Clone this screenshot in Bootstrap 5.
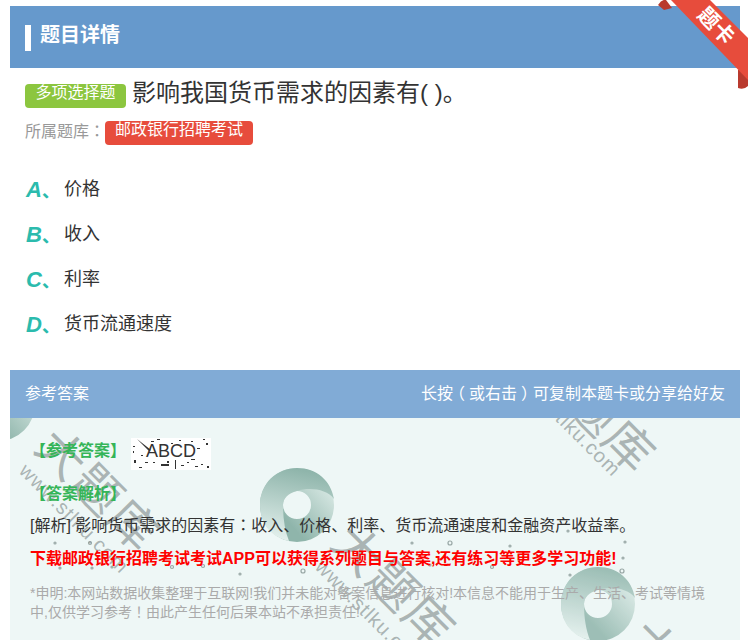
<!DOCTYPE html>
<html lang="zh-CN">
<head>
<meta charset="utf-8">
<link rel="stylesheet" href="https://cdn.jsdelivr.net/npm/bootstrap@5.3.0/dist/css/bootstrap.min.css">
<style>
html,body{height:640px;overflow:hidden;background:#fff}
body{font-family:"Liberation Sans","Noto Sans CJK SC",sans-serif;color:#333;position:relative}
.sheet{margin:6px 10px 0;width:730px}
.head-bar{height:62px;background:#6699cc;padding:0 15px;color:#fff;font-size:20px;font-weight:700}
.head-tick{width:6px;height:26px;background:#fff;margin-right:9px;margin-top:2px}
.head-title{margin-top:-5px}
.q-area{padding:14px 15px 0}
.kind-tag{width:101px;height:24px;background:#8cc63f;color:#fff;border-radius:4px;font-size:16px;line-height:18px;text-align:center;margin-right:6px;margin-top:2px}
.q-text{font-size:24px;line-height:22px;color:#333}
.bank-row{margin-top:13px;height:28px;color:#999;font-size:16px}
.bank-lbl{line-height:18px}
.bank-tag{background:#e74c3c;color:#fff;border-radius:4px;height:24px;width:148px;font-size:16px;line-height:18px;text-align:center}
.opts{margin-top:18px;padding-left:1px}
.opt{height:45px;font-size:18px;color:#333}
.opt-l{width:38px;color:#2bbbad;font-weight:700;font-style:italic;font-size:22px}
.opt-l span{font-style:normal;font-size:18px}
.ans-head{margin-top:23px;height:48px;background:#81abd6;color:#fff;font-size:16px;padding:0 15px}
.par-l,.par-r{display:inline-block}
.par-l{transform:translateX(-4px)}
.par-r{transform:translateX(4px)}
.ans-body{height:222px;background:#eef7f6;padding:20px 20px 0;overflow:hidden;position:relative}
.ans-flow{position:relative;z-index:1}
.back-rings{position:absolute;left:0;top:0}
.ans-label{color:#35b558;font-size:16px;font-weight:700;line-height:24px}
.lab1{margin-top:-6px}
.abcd{width:80px;height:32px;background:#fff;color:#333;font-size:18px;line-height:27px;text-align:center;margin-left:5px;position:relative;overflow:hidden}
.abcd svg{position:absolute;left:0;top:0}
.abcd b{font-weight:400;position:relative}
.lab2{margin-top:12px}
.expl{font-size:16px;color:#333;line-height:24px;margin-top:6px}
.promo{font-size:16px;font-weight:700;color:#f00;line-height:24px;margin-top:9px}
.note{font-size:14px;color:#aaa;line-height:18px;margin-top:13px}
.pc{font-family:"Noto Sans CJK TC",sans-serif}
.overlay{position:absolute;left:10px;top:418px;width:730px;height:222px;overflow:hidden;pointer-events:none}
.ring{position:absolute;left:0;top:0;opacity:.85}
.wm{position:absolute;color:rgba(125,135,135,.6);white-space:nowrap;transform:rotate(45deg);transform-origin:0 0;line-height:1}
.wm-big{font-size:48px;letter-spacing:2px}
.wm-url{font-size:20px;letter-spacing:1px;font-family:"Liberation Sans",sans-serif}
.ribbon{position:absolute;right:2px;top:0;width:90px;height:90px}
.rib-text{position:absolute;left:681px;top:12px;width:70px;text-align:center;color:#fff;font-size:21px;font-weight:700;line-height:28px;transform:rotate(45deg)}
</style>
</head>
<body>
<div class="sheet">
  <div class="head-bar d-flex align-items-center"><span class="head-tick"></span><span class="head-title">题目详情</span></div>
  <div class="q-area">
    <div class="d-flex align-items-start"><span class="kind-tag">多项选择题</span><span class="q-text">影响我国货币需求的因素有( )。</span></div>
    <div class="bank-row d-flex align-items-start"><span class="bank-lbl">所属题库<span class="pc" lang="zh-TW">：</span></span><span class="bank-tag">邮政银行招聘考试</span></div>
    <div class="opts">
      <div class="opt d-flex align-items-center"><span class="opt-l">A<span>、</span></span><span>价格</span></div>
      <div class="opt d-flex align-items-center"><span class="opt-l">B<span>、</span></span><span>收入</span></div>
      <div class="opt d-flex align-items-center"><span class="opt-l">C<span>、</span></span><span>利率</span></div>
      <div class="opt d-flex align-items-center"><span class="opt-l">D<span>、</span></span><span>货币流通速度</span></div>
    </div>
  </div>
  <div class="ans-head d-flex align-items-center justify-content-between"><span>参考答案</span><span>长按<span class="par-l">（</span>或右击<span class="par-r">）</span>可复制本题卡或分享给好友</span></div>
  <div class="ans-body">
    <svg class="back-rings" width="730" height="222">
      <defs>
        <linearGradient id="ga" x1="0.4" y1="0" x2="0.2" y2="1"><stop offset="0" stop-color="#8fb5ab"/><stop offset="1" stop-color="#e6f2ef"/></linearGradient>
        <linearGradient id="gb" x1="0.35" y1="0.7" x2="0.95" y2="0.15"><stop offset="0" stop-color="#8fb5ab"/><stop offset="1" stop-color="#e0eeea"/></linearGradient>
        <g id="swirl">
          <path fill-rule="evenodd" d="M-37 0A37 37 0 1 1 37 0 37 37 0 1 1-37 0ZM-14 0A14 14 0 1 0 14 0 14 14 0 1 0-14 0Z" fill="url(#gb)"/>
          <path d="M-8 36C-28 32-37 16-37 0-37-22-20-37 0-37 20-37 34-24 37-6 30-16 12-18 0-14-9-12-14-6-14 0-14 14-12 26-8 36Z" fill="url(#ga)"/>
        </g>
      </defs>
      <use href="#swirl" x="287" y="87"/>
      <use href="#swirl" x="-12" y="-14"/>
    </svg>
    <div class="ans-flow">
    <div class="d-flex align-items-center">
      <span class="ans-label lab1">【参考答案】</span>
      <span class="abcd"><svg width="80" height="32" fill="#333"><path d="M6 1l14 11-2 1zM2 8h2v1H2zM20 3h3v1h-3zM40 5h2v1h-2zM60 3h2v1h-2zM75 5h2v2h-2zM3 22h2v3H3zM14 24h3v1h-3zM30 26h8v2h-8zM44 22h1v9h-1zM50 27h3v1h-3zM70 26h2v1h-2zM76 28h2v2h-2zM2 13h1v2H2zM66 10h3v1h-3zM8 29h3v1H8zM26 1h3v1h-3zM48 2h2v1h-2zM72 1h2v1h-2zM10 17h2v1h-2zM60 21h4v1h-4zM22 24h2v1h-2zM36 23h2v2h-2zM56 24h2v1h-2zM64 28h3v1h-3z"/></svg><b>ABCD</b></span>
    </div>
    <div class="ans-label lab2">【答案解析】</div>
    <div class="expl">[解析] 影响货币需求的因素有<span class="pc" lang="zh-TW">：</span>收入、价格、利率、货币流通速度和金融资产收益率。</div>
    <div class="promo">下载邮政银行招聘考试考试APP可以获得系列题目与答案,还有练习等更多学习功能!</div>
    <div class="note">*申明:本网站数据收集整理于互联网!我们并未能对答案信息进行核对!本信息不能用于生产、生活、考试等情境中,仅供学习参考<span class="pc" lang="zh-TW">！</span>由此产生任何后果本站不承担责任!</div>
    </div>
  </div>
</div>
<div class="overlay">
  <svg width="730" height="222" class="ring">
    <use href="#swirl" x="588" y="186"/>
    <g fill="none" stroke="#8a9a98" stroke-width="1.2">
      <circle cx="45" cy="125" r="1"/><circle cx="80" cy="125" r="1.5"/><circle cx="50" cy="150" r="1"/><circle cx="82" cy="150" r="1"/><circle cx="102" cy="149" r="1"/><circle cx="162" cy="149" r="1.5"/><circle cx="193" cy="148" r="1.5"/><circle cx="230" cy="156" r="1"/><circle cx="293" cy="153" r="2"/><circle cx="340" cy="140" r="1"/><circle cx="402" cy="125" r="1"/><circle cx="440" cy="125" r="2"/><circle cx="615" cy="124" r="1"/><circle cx="613" cy="140" r="1"/><circle cx="612" cy="153" r="2"/><circle cx="560" cy="157" r="1"/><circle cx="420" cy="147" r="1"/><circle cx="482" cy="149" r="1.5"/><circle cx="558" cy="113" r="1"/><circle cx="500" cy="128" r="1"/>
    </g>
  </svg>
  <span class="wm wm-big" style="left:51px;top:3px">大题库</span>
  <span class="wm wm-url" style="left:20px;top:42px">www.stlku.com</span>
  <span class="wm wm-big" style="left:347px;top:99px">大题库</span>
  <span class="wm wm-url" style="left:316px;top:138px">www.stlku.com</span>
  <span class="wm wm-big" style="left:547px;top:-76px">大题库</span>
  <span class="wm wm-url" style="left:512px;top:-55px">www.stlku.com</span>
  <span class="wm wm-big" style="left:643px;top:195px">大题库</span>
</div>
<svg class="ribbon" viewBox="0 0 90 90">
  <path d="M0 5Q4-1 8 0L14 8 6 10Z" fill="#b93a2e"/>
  <path d="M80 70 L80 88Q86 90 90 86V70Z" fill="#b93a2e"/>
  <path d="M13 0H52L90 38V80Z" fill="#e74c3c"/>
</svg>
<div class="rib-text">题卡</div>
</body>
</html>
